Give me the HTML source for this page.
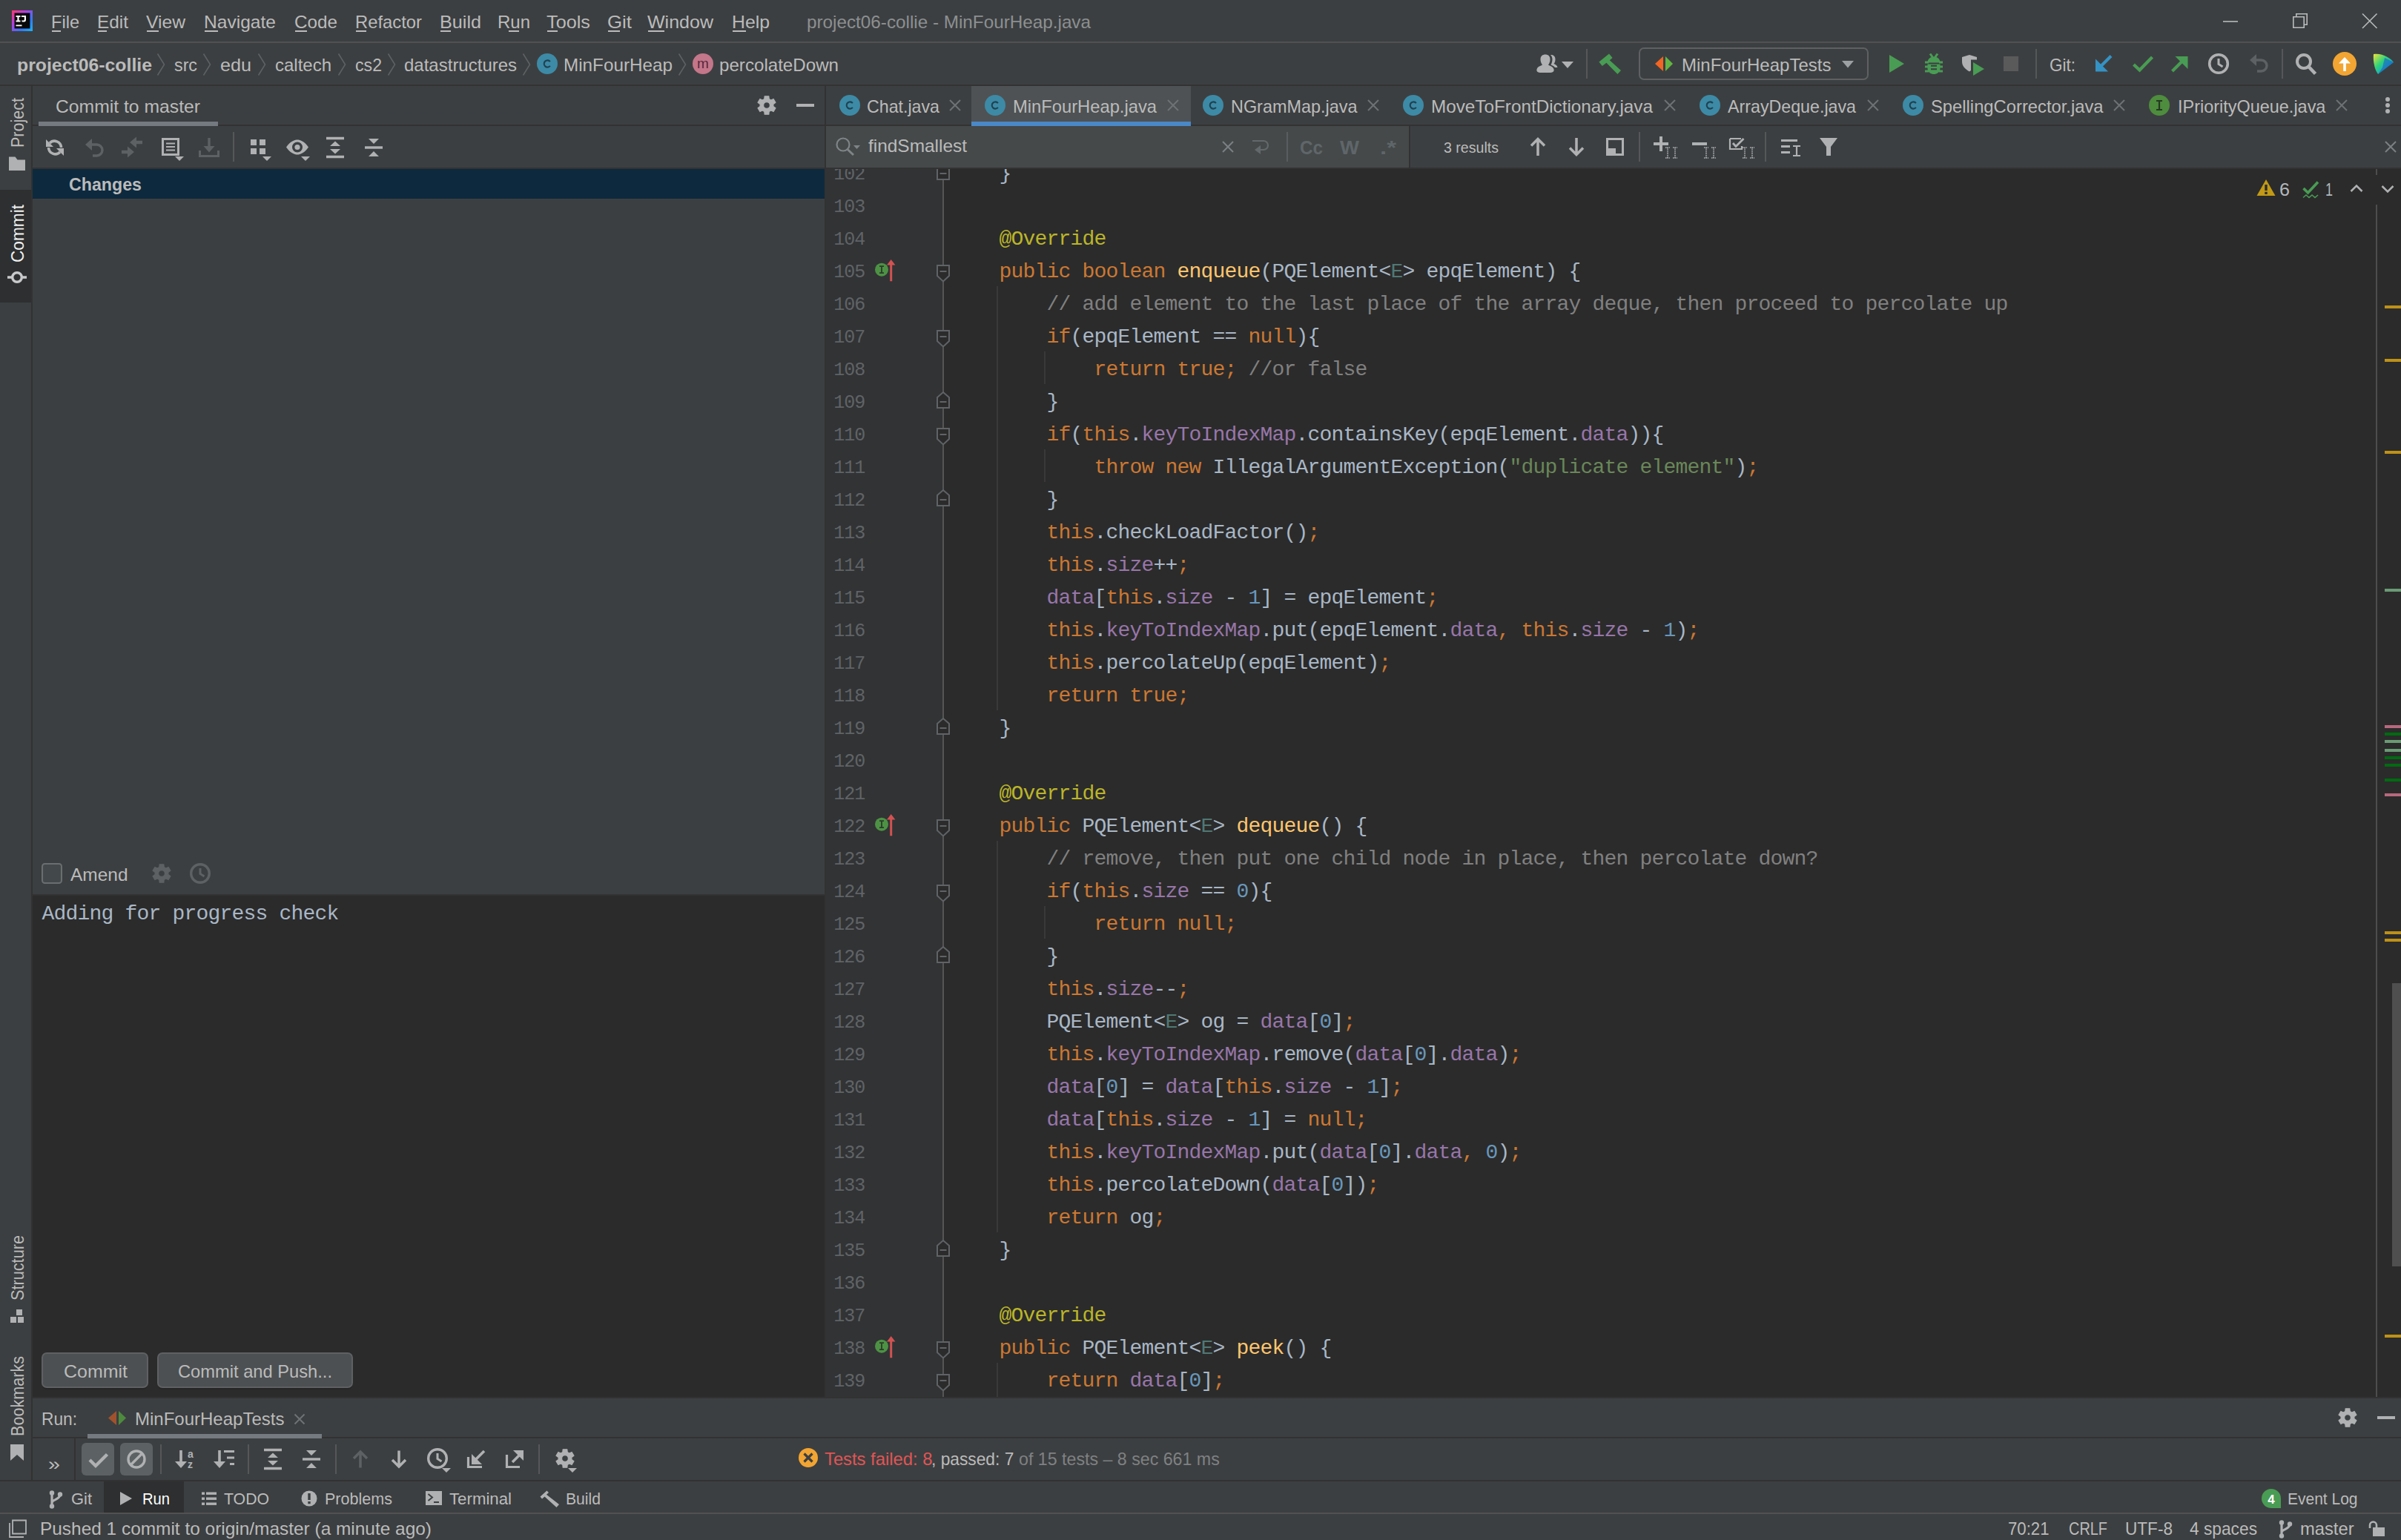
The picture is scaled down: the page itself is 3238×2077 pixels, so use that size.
<!DOCTYPE html>
<html><head><meta charset="utf-8"><title>project06-collie - MinFourHeap.java</title><style>
html,body{margin:0;padding:0;background:#3c3f41;}
body{width:3238px;height:2077px;overflow:hidden;position:relative;font-family:"Liberation Sans",sans-serif;color:#bbbbbb;}
div,span,svg{position:absolute;}
span{white-space:pre;line-height:1;}
.cl{font-family:"Liberation Mono",monospace;font-size:28px;letter-spacing:-0.803px;color:#a9b7c6;}
.cl i{font-style:normal;}
.k{color:#cc7832}.m{color:#ffc66d}.a{color:#bbb529}.c{color:#808080}.s{color:#6a8759}.n{color:#6897bb}.f{color:#9876aa}.t{color:#507874}
.ln{font-family:"Liberation Mono",monospace;font-size:25px;letter-spacing:-1.0px;color:#606366;}
</style></head><body>
<div style="left:0px;top:56px;width:3238px;height:2px;background:#515151;"></div>
<div style="left:0px;top:114px;width:3238px;height:2px;background:#323232;"></div>
<div style="left:42px;top:116px;width:2px;height:1882px;background:#323232;"></div>
<div style="left:0px;top:256px;width:42px;height:152px;background:#2d2f30;"></div>
<div style="left:44px;top:168px;width:1068px;height:2px;background:#323232;"></div>
<div style="left:52px;top:164px;width:242px;height:6px;background:#747a80;"></div>
<div style="left:44px;top:226px;width:1068px;height:2px;background:#323232;"></div>
<div style="left:44px;top:228px;width:1068px;height:40px;background:#0d293e;"></div>
<div style="left:44px;top:1206px;width:1068px;height:678px;background:#2b2b2b;"></div>
<div style="left:44px;top:1206px;width:1068px;height:2px;background:#323232;"></div>
<div style="left:1112px;top:116px;width:2px;height:1770px;background:#323232;"></div>
<div style="left:1114px;top:168px;width:2124px;height:2px;background:#323232;"></div>
<div style="left:1310px;top:116px;width:296px;height:54px;background:#4e5254;"></div>
<div style="left:1310px;top:164px;width:296px;height:6px;background:#4a88c7;"></div>
<div style="left:1114px;top:170px;width:786px;height:56px;background:#45494a;"></div>
<div style="left:1900px;top:170px;width:2px;height:56px;background:#323232;"></div>
<div style="left:1114px;top:226px;width:2124px;height:2px;background:#323232;"></div>
<div style="left:1735px;top:178px;width:2px;height:40px;background:#5a5d5f;"></div>
<div style="left:2210px;top:178px;width:2px;height:40px;background:#555759;"></div>
<div style="left:2380px;top:178px;width:2px;height:40px;background:#555759;"></div>
<div style="left:1114px;top:228px;width:2124px;height:1656px;background:#2b2b2b;"></div>
<div style="left:1114px;top:228px;width:158px;height:1656px;background:#313335;"></div>
<div style="left:1271px;top:228px;width:2px;height:1656px;background:#555555;"></div>
<div style="left:3204px;top:228px;width:2px;height:1656px;background:#4d4d4d;"></div>
<div style="left:3100px;top:236px;width:138px;height:40px;background:#2b2b2b;"></div>
<div style="left:44px;top:1884px;width:3194px;height:2px;background:#323232;"></div>
<div style="left:44px;top:1938px;width:3194px;height:2px;background:#323232;"></div>
<div style="left:118px;top:1934px;width:316px;height:6px;background:#747a80;"></div>
<div style="left:100px;top:1940px;width:2px;height:56px;background:#323232;"></div>
<div style="left:0px;top:1996px;width:3238px;height:2px;background:#323232;"></div>
<div style="left:140px;top:1998px;width:108px;height:42px;background:#2d2f30;"></div>
<div style="left:0px;top:2040px;width:3238px;height:2px;background:#515151;"></div>
<div style="left:2139px;top:66px;width:2px;height:40px;background:#555759;"></div>
<div style="left:2745px;top:66px;width:2px;height:40px;background:#555759;"></div>
<div style="left:3077px;top:66px;width:2px;height:40px;background:#555759;"></div>
<div style="left:216px;top:1948px;width:2px;height:40px;background:#555759;"></div>
<div style="left:334px;top:1948px;width:2px;height:40px;background:#555759;"></div>
<div style="left:452px;top:1948px;width:2px;height:40px;background:#555759;"></div>
<div style="left:726px;top:1948px;width:2px;height:40px;background:#555759;"></div>
<div style="left:314px;top:178px;width:2px;height:40px;background:#555759;"></div>
<div style="left:3216px;top:412px;width:22px;height:4px;background:#be9117;"></div>
<div style="left:3216px;top:484px;width:22px;height:4px;background:#be9117;"></div>
<div style="left:3216px;top:608px;width:22px;height:4px;background:#be9117;"></div>
<div style="left:3216px;top:794px;width:22px;height:4px;background:#6a9a75;"></div>
<div style="left:3216px;top:978px;width:22px;height:4px;background:#b8687e;"></div>
<div style="left:3216px;top:988px;width:22px;height:4px;background:#006a12;"></div>
<div style="left:3216px;top:998px;width:22px;height:4px;background:#6a9a75;"></div>
<div style="left:3216px;top:1010px;width:22px;height:4px;background:#6a9a75;"></div>
<div style="left:3216px;top:1020px;width:22px;height:4px;background:#006a12;"></div>
<div style="left:3216px;top:1030px;width:22px;height:4px;background:#006a12;"></div>
<div style="left:3216px;top:1050px;width:22px;height:4px;background:#006a12;"></div>
<div style="left:3216px;top:1070px;width:22px;height:4px;background:#b8687e;"></div>
<div style="left:3216px;top:1256px;width:22px;height:4px;background:#be9117;"></div>
<div style="left:3216px;top:1266px;width:22px;height:4px;background:#be9117;"></div>
<div style="left:3216px;top:1800px;width:22px;height:4px;background:#be9117;"></div>
<div style="left:3226px;top:1326px;width:12px;height:382px;background:#4f4f4f;"></div>
<div style="left:70px;top:41px;width:12px;height:2px;background:#bbbbbb;"></div>
<div style="left:132px;top:41px;width:12px;height:2px;background:#bbbbbb;"></div>
<div style="left:198px;top:41px;width:16px;height:2px;background:#bbbbbb;"></div>
<div style="left:276px;top:41px;width:18px;height:2px;background:#bbbbbb;"></div>
<div style="left:398px;top:41px;width:16px;height:2px;background:#bbbbbb;"></div>
<div style="left:480px;top:41px;width:14px;height:2px;background:#bbbbbb;"></div>
<div style="left:594px;top:41px;width:14px;height:2px;background:#bbbbbb;"></div>
<div style="left:686px;top:41px;width:14px;height:2px;background:#bbbbbb;"></div>
<div style="left:738px;top:41px;width:14px;height:2px;background:#bbbbbb;"></div>
<div style="left:820px;top:41px;width:16px;height:2px;background:#bbbbbb;"></div>
<div style="left:874px;top:41px;width:22px;height:2px;background:#bbbbbb;"></div>
<div style="left:988px;top:41px;width:18px;height:2px;background:#bbbbbb;"></div>
<svg style="left:0;top:0" width="3238" height="2077" viewBox="0 0 3238 2077"><defs><linearGradient id="lg1" x1="0" y1="0" x2="1" y2="1"><stop offset="0" stop-color="#fc3a6b"/><stop offset="0.35" stop-color="#b43fe0"/><stop offset="0.7" stop-color="#2d7cf5"/><stop offset="1" stop-color="#1cb4f0"/></linearGradient><linearGradient id="lg2" x1="0" y1="0" x2="1" y2="1"><stop offset="0" stop-color="#f6e23a"/><stop offset="0.4" stop-color="#2fd37a"/><stop offset="0.75" stop-color="#14a0d8"/><stop offset="1" stop-color="#1b4fc4"/></linearGradient></defs>
<rect x="16" y="14" width="28" height="28" fill="url(#lg1)"/>
<rect x="19.5" y="17.5" width="21" height="21" fill="#080808"/>
<path d="M21.5 21 H27.5 V23 H25.6 V27.5 H27.5 V29.5 H21.5 V27.5 H23.4 V23 H21.5 Z" fill="#fff" />
<path d="M29 21 H35 V27 C35 29.5 32.5 30 29.5 29.3 V27.3 C31.5 27.9 32.8 27.8 32.8 26.5 V23 H29 Z" fill="#fff" />
<rect x="21.5" y="33.5" width="8" height="1.8" fill="#fff"/>
<path d="M2998 29 H3018" fill="none" stroke="#b9bbbc" stroke-width="1.6" />
<path d="M3092.8 22.8 H3107.2 V37.2 H3092.8 Z M3096.8 22.8 V18.8 H3111.2 V33.2 H3107.2" fill="none" stroke="#b9bbbc" stroke-width="1.6" />
<path d="M3186 18.5 L3205.5 38 M3205.5 18.5 L3186 38" fill="none" stroke="#b9bbbc" stroke-width="1.6" />
<path d="M212.5 72.5 L221.5 87 L212.5 101.5" fill="none" stroke="#5e6164" stroke-width="1.6" />
<path d="M274.5 72.5 L283.5 87 L274.5 101.5" fill="none" stroke="#5e6164" stroke-width="1.6" />
<path d="M348.5 72.5 L357.5 87 L348.5 101.5" fill="none" stroke="#5e6164" stroke-width="1.6" />
<path d="M456.5 72.5 L465.5 87 L456.5 101.5" fill="none" stroke="#5e6164" stroke-width="1.6" />
<path d="M523.5 72.5 L532.5 87 L523.5 101.5" fill="none" stroke="#5e6164" stroke-width="1.6" />
<path d="M705.5 72.5 L714.5 87 L705.5 101.5" fill="none" stroke="#5e6164" stroke-width="1.6" />
<path d="M915.5 72.5 L924.5 87 L915.5 101.5" fill="none" stroke="#5e6164" stroke-width="1.6" />
<circle cx="738" cy="86" r="14" fill="#3d8aa6"/>
<path d="M741.9 83.1 A4.6 4.6 0 1 0 741.9 88.9" fill="none" stroke="#1f4352" stroke-width="2.1" />
<circle cx="948" cy="86" r="14" fill="#c4768a"/>
<text x="948" y="92" text-anchor="middle" font-family="'Liberation Sans'" font-size="19" fill="#55283a">m</text>
<path d="M2079 98 C2073 98 2072 96 2072.5 93.5 C2073.5 89.5 2078 89 2080 87.5 C2078 85 2077.5 82 2077.5 80 C2077.5 75.5 2080.5 73.5 2084 73.5 C2087.5 73.5 2090.5 75.5 2090.5 80 C2090.5 82 2090 85 2088 87.5 C2090 89 2094.5 89.5 2095.5 93.5 C2096 96 2095 98 2089 98 Z" fill="#afb1b3" />
<path d="M2091 74 C2095 73.5 2097.5 76 2097.5 80 C2097.5 82 2097 84.5 2095.5 86 C2097.5 87 2100 88 2100.5 91 L2097 91 C2096 89.5 2094 88.6 2091.5 87.6 C2093 85 2093.5 82 2093.5 80 C2093.5 77.5 2092.7 75.5 2091 74 Z" fill="#afb1b3" />
<path d="M2106 83 H2122 L2114 92 Z" fill="#afb1b3" />
<path d="M2156.4 83.4 L2170 72.4 L2174.6 78 L2170.8 81.2 L2186 95 L2181.4 100 L2166.4 84.8 L2160.8 89 Z" fill="#499c54" />
<rect x="2211" y="65" width="308" height="42" rx="6" fill="none" stroke="#5e6062" stroke-width="2"/>
<path d="M2232 86 L2243 76 V96 Z" fill="#f26522" />
<path d="M2256 86 L2246 76 V96 Z" fill="#62b543" />
<path d="M2484 82 H2500 L2492 91.5 Z" fill="#9da0a2" />
<path d="M2548 74 L2568 86 L2548 98 Z" fill="#499c54" />
<path d="M2599.5 84.5 C2599.5 79 2604 76.5 2608 76.5 C2612 76.5 2616.5 79 2616.5 84.5 Z" fill="#499c54" />
<path d="M2599.5 86.5 H2616.5 V92 C2616.5 97.5 2612 100 2608 100 C2604 100 2599.5 97.5 2599.5 92 Z" fill="#499c54" />
<path d="M2603 72.5 L2606.5 77.5 M2613 72.5 L2609.5 77.5 M2596 84 H2601 M2615 84 H2620 M2596 90 H2601 M2615 90 H2620 M2596 96 H2601 M2615 96 H2620" fill="none" stroke="#499c54" stroke-width="3" />
<path d="M2604 88.8 H2612 M2604 93.2 H2612" fill="none" stroke="#3c3f41" stroke-width="2" />
<path d="M2646 77 L2656 74 L2666 77 V80.5 L2658 80.5 L2658 95 L2656 96.5 C2650 93 2646 89 2646 83 Z" fill="#afb1b3" />
<path d="M2661 84 L2676 93 L2661 102 Z" fill="#499c54" />
<rect x="2702" y="76" width="20" height="20" fill="#5a5a5a"/>
<path d="M2847 75.5 L2830 92.5" fill="none" stroke="#3592c4" stroke-width="4" />
<path d="M2826 79.5 V96.5 H2843 Z" fill="#3592c4" />
<path d="M2877.5 87 L2885.5 94.5 L2902.5 77" fill="none" stroke="#499c54" stroke-width="4.2" />
<path d="M2929.5 96 L2946 79.5" fill="none" stroke="#499c54" stroke-width="4" />
<path d="M2933.5 76 H2950.5 V93 Z" fill="#499c54" />
<circle cx="2992" cy="86" r="12.3" fill="none" stroke="#afb1b3" stroke-width="3.6"/>
<path d="M2992 79 V86.5 L2997.5 90" fill="none" stroke="#afb1b3" stroke-width="3" />
<path d="M3044 96 H3049.5 A7.5 7.5 0 0 0 3049.5 81 H3039" fill="none" stroke="#5e6163" stroke-width="3.4" />
<path d="M3034 81 L3043 73 V89 Z" fill="#5e6163" />
<circle cx="3107" cy="83" r="9" fill="none" stroke="#afb1b3" stroke-width="4"/>
<path d="M3113.5 90 L3122.5 99.5" fill="none" stroke="#afb1b3" stroke-width="4.6" />
<circle cx="3162" cy="86" r="16" fill="#f2a532"/>
<path d="M3162 96 V79" fill="none" stroke="#fff" stroke-width="3.6" />
<path d="M3154 85.5 L3162 77 L3170 85.5 Z" fill="#fff" />
<path d="M3201 73 C3212 71 3224 78 3228 84 L3207 100 C3203 95 3200 84 3201 73 Z" fill="url(#lg2)" />
<path d="M3228 84 L3216 78 L3213 91 L3207 100 Z" fill="#1a56c9" opacity="0.55"/>
<path d="M1030.83 133.58 L1031.15 129.83 L1036.85 129.83 L1037.17 133.58 L1039.71 135.04 L1043.12 133.45 L1045.97 138.38 L1042.88 140.53 L1042.88 143.47 L1045.97 145.62 L1043.12 150.55 L1039.71 148.96 L1037.17 150.42 L1036.85 154.17 L1031.15 154.17 L1030.83 150.42 L1028.29 148.96 L1024.88 150.55 L1022.03 145.62 L1025.12 143.47 L1025.12 140.53 L1022.03 138.38 L1024.88 133.45 L1028.29 135.04 Z M1038.40 142.00 A4.4 4.4 0 1 0 1029.60 142.00 A4.4 4.4 0 1 0 1038.40 142.00 Z" fill="#afb1b3" fill-rule="evenodd" stroke="#afb1b3" stroke-width="1.2" stroke-linejoin="round"/>
<rect x="1074" y="140" width="24" height="4" fill="#afb1b3"/>
<path d="M82.5 199 A9 9 0 0 0 67 193 M65.5 199 A9 9 0 0 0 81 205" fill="none" stroke="#afb1b3" stroke-width="3.6" />
<path d="M62 188 V198 H72 Z" fill="#afb1b3" />
<path d="M86 210 V200 H76 Z" fill="#afb1b3" />
<path d="M125 210 H130.5 A7.5 7.5 0 0 0 130.5 195 H120" fill="none" stroke="#5e6163" stroke-width="3.4" />
<path d="M115 195 L124 187 V203 Z" fill="#5e6163" />
<path d="M175 192 L184 184.5 V189.8 H192 V194.2 H184 V199.5 Z" fill="#5e6163" />
<path d="M181 205 L172 197.5 V202.8 H164 V207.2 H172 V212.5 Z" fill="#5e6163" />
<path d="M219.5 187.5 H240.5 V208.5 H219.5 Z" fill="none" stroke="#afb1b3" stroke-width="3" />
<path d="M224 193.5 H236 M224 198 H236 M224 202.5 H236" fill="none" stroke="#afb1b3" stroke-width="1.8" />
<path d="M236 211 H248 L242 217 Z" fill="#afb1b3" />
<path d="M282 186 V200" fill="none" stroke="#5e6163" stroke-width="3.4" />
<path d="M274.5 197 H289.5 L282 205.5 Z" fill="#5e6163" />
<path d="M269.5 203 V210.5 H294.5 V203" fill="none" stroke="#5e6163" stroke-width="3" />
<rect x="338" y="188" width="8" height="8" fill="#afb1b3"/>
<rect x="350" y="188" width="8" height="8" fill="#afb1b3"/>
<rect x="338" y="200" width="8" height="8" fill="#afb1b3"/>
<rect x="350" y="200" width="8" height="8" fill="#afb1b3"/>
<path d="M354 211 H366 L360 217 Z" fill="#afb1b3" />
<path d="M386 198.5 C391 191 397 188.5 401 188.5 C405 188.5 411 191 416 198.5 C411 206 405 208.5 401 208.5 C397 208.5 391 206 386 198.5 Z M401 191.5 A7 7 0 1 0 401 205.5 A7 7 0 1 0 401 191.5 Z" fill="#afb1b3" fill-rule="evenodd"/>
<circle cx="401" cy="198.5" r="3.6" fill="#afb1b3"/>
<path d="M406 211 H418 L412 217 Z" fill="#afb1b3" />
<path d="M440 186.5 H464 M440 211.5 H464" fill="none" stroke="#afb1b3" stroke-width="3.4" />
<path d="M445 197 H459 L452 190.5 Z M445 201 H459 L452 207.5 Z" fill="#afb1b3" />
<path d="M492 199 H516" fill="none" stroke="#afb1b3" stroke-width="3.4" />
<path d="M497 187 H511 L504 194 Z M497 211 H511 L504 204 Z" fill="#afb1b3" />
<circle cx="1146" cy="142" r="14" fill="#3d8aa6"/>
<path d="M1149.9 139.1 A4.6 4.6 0 1 0 1149.9 144.9" fill="none" stroke="#1f4352" stroke-width="2.1" />
<circle cx="1342" cy="142" r="14" fill="#3d8aa6"/>
<path d="M1345.9 139.1 A4.6 4.6 0 1 0 1345.9 144.9" fill="none" stroke="#1f4352" stroke-width="2.1" />
<circle cx="1636" cy="142" r="14" fill="#3d8aa6"/>
<path d="M1639.9 139.1 A4.6 4.6 0 1 0 1639.9 144.9" fill="none" stroke="#1f4352" stroke-width="2.1" />
<circle cx="1906" cy="142" r="14" fill="#3d8aa6"/>
<path d="M1909.9 139.1 A4.6 4.6 0 1 0 1909.9 144.9" fill="none" stroke="#1f4352" stroke-width="2.1" />
<circle cx="2306" cy="142" r="14" fill="#3d8aa6"/>
<path d="M2309.9 139.1 A4.6 4.6 0 1 0 2309.9 144.9" fill="none" stroke="#1f4352" stroke-width="2.1" />
<circle cx="2580" cy="142" r="14" fill="#3d8aa6"/>
<path d="M2583.9 139.1 A4.6 4.6 0 1 0 2583.9 144.9" fill="none" stroke="#1f4352" stroke-width="2.1" />
<circle cx="2912" cy="142" r="14" fill="#4e8c3e"/>
<path d="M2908 136 H2916 M2912 136 V148 M2908 148 H2916" fill="none" stroke="#253a22" stroke-width="2.2" />
<path d="M1281 135 L1295 149 M1295 135 L1281 149" fill="none" stroke="#6e7275" stroke-width="2" />
<path d="M1575 135 L1589 149 M1589 135 L1575 149" fill="none" stroke="#6e7275" stroke-width="2" />
<path d="M1845 135 L1859 149 M1859 135 L1845 149" fill="none" stroke="#6e7275" stroke-width="2" />
<path d="M2245 135 L2259 149 M2259 135 L2245 149" fill="none" stroke="#6e7275" stroke-width="2" />
<path d="M2519 135 L2533 149 M2533 135 L2519 149" fill="none" stroke="#6e7275" stroke-width="2" />
<path d="M2851 135 L2865 149 M2865 135 L2851 149" fill="none" stroke="#6e7275" stroke-width="2" />
<path d="M3151 135 L3165 149 M3165 135 L3151 149" fill="none" stroke="#6e7275" stroke-width="2" />
<circle cx="3220" cy="134" r="3" fill="#afb1b3"/>
<circle cx="3220" cy="142" r="3" fill="#afb1b3"/>
<circle cx="3220" cy="150" r="3" fill="#afb1b3"/>
<circle cx="1137" cy="195" r="8.5" fill="none" stroke="#7f8487" stroke-width="2.2"/>
<path d="M1143 201.5 L1151 209" fill="none" stroke="#7f8487" stroke-width="3" />
<path d="M1151 196 H1160 L1155.5 201 Z" fill="#7f8487" />
<path d="M1649 191 L1663 205 M1663 191 L1649 205" fill="none" stroke="#7b8083" stroke-width="2" />
<path d="M1689 190 H1704 A6 6 0 0 1 1704 202 H1696" fill="none" stroke="#63686b" stroke-width="2.2" />
<path d="M1692 202 L1700 196 V208 Z" fill="#63686b" />
<path d="M2074 210 V188 M2065 196.5 L2074 187.5 L2083 196.5" fill="none" stroke="#afb1b3" stroke-width="3.5" />
<path d="M2126 186 V208 M2117 199.5 L2126 208.5 L2135 199.5" fill="none" stroke="#afb1b3" stroke-width="3.5" />
<path d="M2167.5 187.5 H2188.5 V208.5 H2167.5 Z" fill="none" stroke="#afb1b3" stroke-width="3" />
<rect x="2167" y="200" width="12" height="9" fill="#afb1b3"/>
<path d="M2240 184 V204 M2230 194 H2250" fill="none" stroke="#afb1b3" stroke-width="4" />
<path d="M2246 199 H2252 M2249 199 V213 M2246 213 H2252" fill="none" stroke="#afb1b3" stroke-width="1.6" stroke-dasharray="1.6 0.9"/>
<path d="M2256 199 H2262 M2259 199 V213 M2256 213 H2262" fill="none" stroke="#afb1b3" stroke-width="1.6" stroke-dasharray="1.6 0.9"/>
<path d="M2282 194 H2302" fill="none" stroke="#afb1b3" stroke-width="4" />
<path d="M2298 199 H2304 M2301 199 V213 M2298 213 H2304" fill="none" stroke="#afb1b3" stroke-width="1.6" stroke-dasharray="1.6 0.9"/>
<path d="M2308 199 H2314 M2311 199 V213 M2308 213 H2314" fill="none" stroke="#afb1b3" stroke-width="1.6" stroke-dasharray="1.6 0.9"/>
<path d="M2333 187 H2348 M2333 187 V201 H2349 V197" fill="none" stroke="#afb1b3" stroke-width="2.2" />
<path d="M2337 193 L2341 197.5 L2351.5 187" fill="none" stroke="#afb1b3" stroke-width="2.8" />
<path d="M2350 199 H2356 M2353 199 V213 M2350 213 H2356" fill="none" stroke="#afb1b3" stroke-width="1.6" stroke-dasharray="1.6 0.9"/>
<path d="M2360 199 H2366 M2363 199 V213 M2360 213 H2366" fill="none" stroke="#afb1b3" stroke-width="1.6" stroke-dasharray="1.6 0.9"/>
<path d="M2402 189.5 H2424 M2402 197.5 H2414 M2402 205.5 H2414" fill="none" stroke="#afb1b3" stroke-width="3" />
<path d="M2418 197 H2428 M2423 197 V210 M2418 210 H2428" fill="none" stroke="#afb1b3" stroke-width="2.2" />
<path d="M2454 186 H2478 L2469 198 V210 H2463 V198 Z" fill="#afb1b3" />
<path d="M3217 191 L3231 205 M3231 191 L3217 205" fill="none" stroke="#7b8083" stroke-width="2" />
<path d="M3056 242 L3068.5 264 H3043.5 Z" fill="#c29a15" />
<path d="M3054.3 249 H3057.7 V257 H3054.3 Z M3054.3 258.8 H3057.7 V262 H3054.3 Z" fill="#2b2b2b" />
<path d="M3106.5 254 L3112.5 260 L3126 245.5" fill="none" stroke="#499c54" stroke-width="3.6" />
<path d="M3106 266.5 L3110 263 L3114 266.5 L3118 263 L3122 266.5 L3126 263" fill="none" stroke="#499c54" stroke-width="1.6" />
<path d="M3170.5 258 L3178 250.5 L3185.5 258" fill="none" stroke="#afb1b3" stroke-width="2.6" />
<path d="M3212.5 251 L3220 258.5 L3227.5 251" fill="none" stroke="#afb1b3" stroke-width="2.6" />
<path d="M12 211.5 H20.5 L23.5 215.5 H34 V230 H12 Z" fill="#afb1b3" />
<circle cx="23" cy="374" r="6.3" fill="none" stroke="#c8c9ca" stroke-width="3.4"/>
<path d="M10 374 H16 M30 374 H36" fill="none" stroke="#c8c9ca" stroke-width="3.4" />
<rect x="22" y="1766" width="8" height="8" fill="#afb1b3"/>
<rect x="14" y="1776" width="8" height="8" fill="#afb1b3"/>
<rect x="24" y="1776" width="8" height="8" fill="#afb1b3"/>
<path d="M14 1948 H32 V1970 L23 1962 L14 1970 Z" fill="#afb1b3" />
<rect x="57" y="1165" width="26" height="26" rx="3.5" fill="#43494a" stroke="#6b6e70" stroke-width="2"/>
<path d="M214.83 1169.58 L215.15 1165.83 L220.85 1165.83 L221.17 1169.58 L223.71 1171.04 L227.12 1169.45 L229.97 1174.38 L226.88 1176.53 L226.88 1179.47 L229.97 1181.62 L227.12 1186.55 L223.71 1184.96 L221.17 1186.42 L220.85 1190.17 L215.15 1190.17 L214.83 1186.42 L212.29 1184.96 L208.88 1186.55 L206.03 1181.62 L209.12 1179.47 L209.12 1176.53 L206.03 1174.38 L208.88 1169.45 L212.29 1171.04 Z M222.40 1178.00 A4.4 4.4 0 1 0 213.60 1178.00 A4.4 4.4 0 1 0 222.40 1178.00 Z" fill="#5d6163" fill-rule="evenodd" stroke="#5d6163" stroke-width="1.2" stroke-linejoin="round"/>
<circle cx="270" cy="1178" r="12.3" fill="none" stroke="#5d6163" stroke-width="3.4"/>
<path d="M270 1171 V1178.5 L275.5 1182" fill="none" stroke="#5d6163" stroke-width="3" />
<rect x="57" y="1828" width="142" height="46" rx="6" fill="#252525"/><rect x="213" y="1828" width="262" height="46" rx="6" fill="#252525"/>
<rect x="57" y="1825" width="142" height="46" rx="6" fill="#4c5052" stroke="#5e6062" stroke-width="2"/>
<rect x="213" y="1825" width="262" height="46" rx="6" fill="#4c5052" stroke="#5e6062" stroke-width="2"/>
<path d="M146 1912.5 L157 1903 V1922 Z" fill="#a0522d" />
<path d="M170 1912.5 L160 1903 V1922 Z" fill="#4d8a3e" />
<path d="M397.5 1907.5 L410.5 1920.5 M410.5 1907.5 L397.5 1920.5" fill="none" stroke="#6e7275" stroke-width="2" />
<path d="M3162.83 1903.58 L3163.15 1899.83 L3168.85 1899.83 L3169.17 1903.58 L3171.71 1905.04 L3175.12 1903.45 L3177.97 1908.38 L3174.88 1910.53 L3174.88 1913.47 L3177.97 1915.62 L3175.12 1920.55 L3171.71 1918.96 L3169.17 1920.42 L3168.85 1924.17 L3163.15 1924.17 L3162.83 1920.42 L3160.29 1918.96 L3156.88 1920.55 L3154.03 1915.62 L3157.12 1913.47 L3157.12 1910.53 L3154.03 1908.38 L3156.88 1903.45 L3160.29 1905.04 Z M3170.40 1912.00 A4.4 4.4 0 1 0 3161.60 1912.00 A4.4 4.4 0 1 0 3170.40 1912.00 Z" fill="#afb1b3" fill-rule="evenodd" stroke="#afb1b3" stroke-width="1.2" stroke-linejoin="round"/>
<rect x="3206" y="1910" width="24" height="4" fill="#afb1b3"/>
<rect x="110" y="1946" width="44" height="44" rx="6" fill="#5c6164"/>
<rect x="162" y="1946" width="44" height="44" rx="6" fill="#5c6164"/>
<path d="M121 1969 L129 1977 L144.5 1961.5" fill="none" stroke="#afb1b3" stroke-width="4.4" />
<circle cx="184" cy="1968" r="11" fill="none" stroke="#afb1b3" stroke-width="3.4"/>
<path d="M176.5 1975.5 L191.5 1960.5" fill="none" stroke="#afb1b3" stroke-width="3.4" />
<path d="M244 1956 V1976" fill="none" stroke="#afb1b3" stroke-width="3.6" />
<path d="M236 1971 H252 L244 1980 Z" fill="#afb1b3" />
<text x="253" y="1966" font-family="'Liberation Sans'" font-weight="700" font-size="14" fill="#afb1b3">a</text>
<text x="253" y="1979.5" font-family="'Liberation Sans'" font-weight="700" font-size="14" fill="#afb1b3">z</text>
<path d="M296 1956 V1976" fill="none" stroke="#afb1b3" stroke-width="3.6" />
<path d="M288 1971 H304 L296 1980 Z" fill="#afb1b3" />
<path d="M302 1957.5 H316 M306 1966 H316 M310 1974.5 H316" fill="none" stroke="#afb1b3" stroke-width="3" />
<path d="M356 1955.5 H380 M356 1980.5 H380" fill="none" stroke="#afb1b3" stroke-width="3.4" />
<path d="M361 1966 H375 L368 1959.5 Z M361 1970 H375 L368 1976.5 Z" fill="#afb1b3" />
<path d="M408 1968 H432" fill="none" stroke="#afb1b3" stroke-width="3.4" />
<path d="M413 1956 H427 L420 1963 Z M413 1980 H427 L420 1973 Z" fill="#afb1b3" />
<path d="M486 1979.5 V1958.5 M477 1967.0 L486 1958.0 L495 1967.0" fill="none" stroke="#5e6163" stroke-width="3.5" />
<path d="M538 1956.5 V1977.5 M529 1969.0 L538 1978.0 L547 1969.0" fill="none" stroke="#afb1b3" stroke-width="3.5" />
<circle cx="590" cy="1967" r="12.3" fill="none" stroke="#afb1b3" stroke-width="3.4"/>
<path d="M590 1960 V1967.5 L595.5 1971" fill="none" stroke="#afb1b3" stroke-width="3" />
<path d="M596 1980 H608 L602 1986 Z" fill="#afb1b3" />
<path d="M653 1957 L638 1972" fill="none" stroke="#afb1b3" stroke-width="3.6" />
<path d="M636 1961 V1975 H650 Z" fill="#afb1b3" />
<path d="M631.5 1965 V1978.5 H650" fill="none" stroke="#afb1b3" stroke-width="3.2" />
<path d="M691 1972 L703 1960" fill="none" stroke="#afb1b3" stroke-width="3.6" />
<path d="M692 1956 H706 V1970 Z" fill="#afb1b3" />
<path d="M683.5 1962 V1978.5 H701" fill="none" stroke="#afb1b3" stroke-width="3.2" />
<path d="M758.83 1958.58 L759.15 1954.83 L764.85 1954.83 L765.17 1958.58 L767.71 1960.04 L771.12 1958.45 L773.97 1963.38 L770.88 1965.53 L770.88 1968.47 L773.97 1970.62 L771.12 1975.55 L767.71 1973.96 L765.17 1975.42 L764.85 1979.17 L759.15 1979.17 L758.83 1975.42 L756.29 1973.96 L752.88 1975.55 L750.03 1970.62 L753.12 1968.47 L753.12 1965.53 L750.03 1963.38 L752.88 1958.45 L756.29 1960.04 Z M766.40 1967.00 A4.4 4.4 0 1 0 757.60 1967.00 A4.4 4.4 0 1 0 766.40 1967.00 Z" fill="#afb1b3" fill-rule="evenodd" stroke="#afb1b3" stroke-width="1.2" stroke-linejoin="round"/>
<path d="M766 1980 H778 L772 1986 Z" fill="#afb1b3" />
<circle cx="1090" cy="1966" r="13" fill="#f2a532"/>
<path d="M1084.5 1960.5 L1095.5 1971.5 M1095.5 1960.5 L1084.5 1971.5" fill="none" stroke="#3c3f41" stroke-width="3.2" />
<g transform="translate(66,2010) scale(1.0)"><circle cx="4" cy="3.5" r="3.2" fill="#afb1b3"/><circle cx="15" cy="5.5" r="3.2" fill="#afb1b3"/><circle cx="4" cy="21.5" r="3.2" fill="#afb1b3"/><path d="M4 3.5 V21.5 M15 5.5 C15 13 4 12 4 17" fill="none" stroke="#afb1b3" stroke-width="3.2"/></g>
<path d="M162 2012 L178 2021 L162 2030 Z" fill="#afb1b3" />
<rect x="272" y="2012.5" width="4" height="3.4" fill="#afb1b3"/><rect x="278" y="2012.5" width="14" height="3.4" fill="#afb1b3"/>
<rect x="272" y="2019.5" width="4" height="3.4" fill="#afb1b3"/><rect x="278" y="2019.5" width="14" height="3.4" fill="#afb1b3"/>
<rect x="272" y="2026.5" width="4" height="3.4" fill="#afb1b3"/><rect x="278" y="2026.5" width="14" height="3.4" fill="#afb1b3"/>
<circle cx="417" cy="2021" r="10.5" fill="#afb1b3"/>
<path d="M415.3 2014 H418.7 V2023 H415.3 Z M415.3 2025 H418.7 V2028.3 H415.3 Z" fill="#3c3f41" />
<rect x="574" y="2011" width="22" height="19" fill="#afb1b3"/>
<path d="M577.5 2015 L583 2019.5 L577.5 2024 M585 2026 H592" fill="none" stroke="#3c3f41" stroke-width="2" />
<path d="M728.5 2018.5 L737.5 2010.5 L740 2013 L737 2015.8 L754 2029 L750.5 2033 L734.5 2018.5 L731 2021.5 Z" fill="#afb1b3" />
<path d="M3063 2008 A13 13 0 1 0 3063 2034 H3076 V2021 A13 13 0 0 0 3063 2008 Z" fill="#499c54" />
<text x="3063" y="2027.5" text-anchor="middle" font-family="'Liberation Sans'" font-weight="700" font-size="17" fill="#fff">4</text>
<path d="M17 2050.5 H35 V2068.5 H17 Z" fill="none" stroke="#afb1b3" stroke-width="1.8" />
<path d="M13 2054 V2073 H32" fill="none" stroke="#afb1b3" stroke-width="1.8" />
<g transform="translate(3073,2050) scale(1.0)"><circle cx="4" cy="3.5" r="3.2" fill="#afb1b3"/><circle cx="15" cy="5.5" r="3.2" fill="#afb1b3"/><circle cx="4" cy="21.5" r="3.2" fill="#afb1b3"/><path d="M4 3.5 V21.5 M15 5.5 C15 13 4 12 4 17" fill="none" stroke="#afb1b3" stroke-width="3.2"/></g>
<rect x="3200" y="2060" width="16" height="12" fill="#afb1b3"/>
<path d="M3196 2061 V2057 A4.5 4.5 0 0 1 3205 2057 V2060" fill="none" stroke="#afb1b3" stroke-width="2.6" /></svg>
<div style="left:1114px;top:228px;width:2090px;height:1656px;overflow:hidden;">
<span class="ln" style="left:10.3px;top:-5.16px;">102</span>
<span class="cl" style="left:169.5px;top:-7.46px;">    }</span>
<span class="ln" style="left:10.3px;top:38.84px;">103</span>
<span class="ln" style="left:10.3px;top:82.84px;">104</span>
<span class="cl" style="left:169.5px;top:80.54px;"><i class="a">    @Override</i></span>
<span class="ln" style="left:10.3px;top:126.84px;">105</span>
<span class="cl" style="left:169.5px;top:124.54px;"><i class="k">    public boolean </i><i class="m">enqueue</i>(PQElement&lt;<i class="t">E</i>&gt; epqElement) {</span>
<span class="ln" style="left:10.3px;top:170.84px;">106</span>
<span class="cl" style="left:169.5px;top:168.54px;"><i class="c">        // add element to the last place of the array deque, then proceed to percolate up</i></span>
<span class="ln" style="left:10.3px;top:214.84px;">107</span>
<span class="cl" style="left:169.5px;top:212.54px;"><i class="k">        if</i>(epqElement == <i class="k">null</i>){</span>
<span class="ln" style="left:10.3px;top:258.84px;">108</span>
<span class="cl" style="left:169.5px;top:256.54px;"><i class="k">            return true; </i><i class="c">//or false</i></span>
<span class="ln" style="left:10.3px;top:302.84px;">109</span>
<span class="cl" style="left:169.5px;top:300.54px;">        }</span>
<span class="ln" style="left:10.3px;top:346.84px;">110</span>
<span class="cl" style="left:169.5px;top:344.54px;"><i class="k">        if</i>(<i class="k">this</i>.<i class="f">keyToIndexMap</i>.containsKey(epqElement.<i class="f">data</i>)){</span>
<span class="ln" style="left:10.3px;top:390.84px;">111</span>
<span class="cl" style="left:169.5px;top:388.54px;"><i class="k">            throw new </i>IllegalArgumentException(<i class="s">&quot;duplicate element&quot;</i>)<i class="k">;</i></span>
<span class="ln" style="left:10.3px;top:434.84px;">112</span>
<span class="cl" style="left:169.5px;top:432.54px;">        }</span>
<span class="ln" style="left:10.3px;top:478.84px;">113</span>
<span class="cl" style="left:169.5px;top:476.54px;"><i class="k">        this</i>.checkLoadFactor()<i class="k">;</i></span>
<span class="ln" style="left:10.3px;top:522.84px;">114</span>
<span class="cl" style="left:169.5px;top:520.54px;"><i class="k">        this</i>.<i class="f">size</i>++<i class="k">;</i></span>
<span class="ln" style="left:10.3px;top:566.84px;">115</span>
<span class="cl" style="left:169.5px;top:564.54px;"><i class="f">        data</i>[<i class="k">this</i>.<i class="f">size</i> - <i class="n">1</i>] = epqElement<i class="k">;</i></span>
<span class="ln" style="left:10.3px;top:610.84px;">116</span>
<span class="cl" style="left:169.5px;top:608.54px;"><i class="k">        this</i>.<i class="f">keyToIndexMap</i>.put(epqElement.<i class="f">data</i><i class="k">, this</i>.<i class="f">size</i> - <i class="n">1</i>)<i class="k">;</i></span>
<span class="ln" style="left:10.3px;top:654.84px;">117</span>
<span class="cl" style="left:169.5px;top:652.54px;"><i class="k">        this</i>.percolateUp(epqElement)<i class="k">;</i></span>
<span class="ln" style="left:10.3px;top:698.84px;">118</span>
<span class="cl" style="left:169.5px;top:696.54px;"><i class="k">        return true;</i></span>
<span class="ln" style="left:10.3px;top:742.84px;">119</span>
<span class="cl" style="left:169.5px;top:740.54px;">    }</span>
<span class="ln" style="left:10.3px;top:786.84px;">120</span>
<span class="ln" style="left:10.3px;top:830.84px;">121</span>
<span class="cl" style="left:169.5px;top:828.54px;"><i class="a">    @Override</i></span>
<span class="ln" style="left:10.3px;top:874.84px;">122</span>
<span class="cl" style="left:169.5px;top:872.54px;"><i class="k">    public </i>PQElement&lt;<i class="t">E</i>&gt; <i class="m">dequeue</i>() {</span>
<span class="ln" style="left:10.3px;top:918.84px;">123</span>
<span class="cl" style="left:169.5px;top:916.54px;"><i class="c">        // remove, then put one child node in place, then percolate down?</i></span>
<span class="ln" style="left:10.3px;top:962.84px;">124</span>
<span class="cl" style="left:169.5px;top:960.54px;"><i class="k">        if</i>(<i class="k">this</i>.<i class="f">size</i> == <i class="n">0</i>){</span>
<span class="ln" style="left:10.3px;top:1006.84px;">125</span>
<span class="cl" style="left:169.5px;top:1004.54px;"><i class="k">            return null;</i></span>
<span class="ln" style="left:10.3px;top:1050.84px;">126</span>
<span class="cl" style="left:169.5px;top:1048.54px;">        }</span>
<span class="ln" style="left:10.3px;top:1094.84px;">127</span>
<span class="cl" style="left:169.5px;top:1092.54px;"><i class="k">        this</i>.<i class="f">size</i>--<i class="k">;</i></span>
<span class="ln" style="left:10.3px;top:1138.84px;">128</span>
<span class="cl" style="left:169.5px;top:1136.54px;">        PQElement&lt;<i class="t">E</i>&gt; og = <i class="f">data</i>[<i class="n">0</i>]<i class="k">;</i></span>
<span class="ln" style="left:10.3px;top:1182.84px;">129</span>
<span class="cl" style="left:169.5px;top:1180.54px;"><i class="k">        this</i>.<i class="f">keyToIndexMap</i>.remove(<i class="f">data</i>[<i class="n">0</i>].<i class="f">data</i>)<i class="k">;</i></span>
<span class="ln" style="left:10.3px;top:1226.84px;">130</span>
<span class="cl" style="left:169.5px;top:1224.54px;"><i class="f">        data</i>[<i class="n">0</i>] = <i class="f">data</i>[<i class="k">this</i>.<i class="f">size</i> - <i class="n">1</i>]<i class="k">;</i></span>
<span class="ln" style="left:10.3px;top:1270.84px;">131</span>
<span class="cl" style="left:169.5px;top:1268.54px;"><i class="f">        data</i>[<i class="k">this</i>.<i class="f">size</i> - <i class="n">1</i>] = <i class="k">null;</i></span>
<span class="ln" style="left:10.3px;top:1314.84px;">132</span>
<span class="cl" style="left:169.5px;top:1312.54px;"><i class="k">        this</i>.<i class="f">keyToIndexMap</i>.put(<i class="f">data</i>[<i class="n">0</i>].<i class="f">data</i><i class="k">, </i><i class="n">0</i>)<i class="k">;</i></span>
<span class="ln" style="left:10.3px;top:1358.84px;">133</span>
<span class="cl" style="left:169.5px;top:1356.54px;"><i class="k">        this</i>.percolateDown(<i class="f">data</i>[<i class="n">0</i>])<i class="k">;</i></span>
<span class="ln" style="left:10.3px;top:1402.84px;">134</span>
<span class="cl" style="left:169.5px;top:1400.54px;"><i class="k">        return </i>og<i class="k">;</i></span>
<span class="ln" style="left:10.3px;top:1446.84px;">135</span>
<span class="cl" style="left:169.5px;top:1444.54px;">    }</span>
<span class="ln" style="left:10.3px;top:1490.84px;">136</span>
<span class="ln" style="left:10.3px;top:1534.84px;">137</span>
<span class="cl" style="left:169.5px;top:1532.54px;"><i class="a">    @Override</i></span>
<span class="ln" style="left:10.3px;top:1578.84px;">138</span>
<span class="cl" style="left:169.5px;top:1576.54px;"><i class="k">    public </i>PQElement&lt;<i class="t">E</i>&gt; <i class="m">peek</i>() {</span>
<span class="ln" style="left:10.3px;top:1622.84px;">139</span>
<span class="cl" style="left:169.5px;top:1620.54px;"><i class="k">        return </i><i class="f">data</i>[<i class="n">0</i>]<i class="k">;</i></span>
<div style="left:230px;top:158px;width:2px;height:572px;background:#393939;"></div>
<div style="left:230px;top:906px;width:2px;height:528px;background:#393939;"></div>
<div style="left:230px;top:1610px;width:2px;height:88px;background:#393939;"></div>
<div style="left:294px;top:246px;width:2px;height:44px;background:#393939;"></div>
<div style="left:294px;top:378px;width:2px;height:44px;background:#393939;"></div>
<div style="left:294px;top:994px;width:2px;height:44px;background:#393939;"></div>
<svg style="left:148px;top:128px" width="20" height="26" viewBox="0 0 20 26"><path d="M2 2 H18 V16 L10 23.5 L2 16 Z" fill="#2b2b2b" stroke="#606366" stroke-width="2"/><path d="M5.5 10 H14.5" stroke="#606366" stroke-width="2"/></svg>
<svg style="left:148px;top:216px" width="20" height="26" viewBox="0 0 20 26"><path d="M2 2 H18 V16 L10 23.5 L2 16 Z" fill="#2b2b2b" stroke="#606366" stroke-width="2"/><path d="M5.5 10 H14.5" stroke="#606366" stroke-width="2"/></svg>
<svg style="left:148px;top:348px" width="20" height="26" viewBox="0 0 20 26"><path d="M2 2 H18 V16 L10 23.5 L2 16 Z" fill="#2b2b2b" stroke="#606366" stroke-width="2"/><path d="M5.5 10 H14.5" stroke="#606366" stroke-width="2"/></svg>
<svg style="left:148px;top:876px" width="20" height="26" viewBox="0 0 20 26"><path d="M2 2 H18 V16 L10 23.5 L2 16 Z" fill="#2b2b2b" stroke="#606366" stroke-width="2"/><path d="M5.5 10 H14.5" stroke="#606366" stroke-width="2"/></svg>
<svg style="left:148px;top:964px" width="20" height="26" viewBox="0 0 20 26"><path d="M2 2 H18 V16 L10 23.5 L2 16 Z" fill="#2b2b2b" stroke="#606366" stroke-width="2"/><path d="M5.5 10 H14.5" stroke="#606366" stroke-width="2"/></svg>
<svg style="left:148px;top:1580px" width="20" height="26" viewBox="0 0 20 26"><path d="M2 2 H18 V16 L10 23.5 L2 16 Z" fill="#2b2b2b" stroke="#606366" stroke-width="2"/><path d="M5.5 10 H14.5" stroke="#606366" stroke-width="2"/></svg>
<svg style="left:148px;top:1624px" width="20" height="26" viewBox="0 0 20 26"><path d="M2 2 H18 V16 L10 23.5 L2 16 Z" fill="#2b2b2b" stroke="#606366" stroke-width="2"/><path d="M5.5 10 H14.5" stroke="#606366" stroke-width="2"/></svg>
<svg style="left:148px;top:-9px" width="20" height="26" viewBox="0 0 20 26"><path d="M2 23 H18 V9 L10 2 L2 9 Z" fill="#2b2b2b" stroke="#606366" stroke-width="2"/><path d="M5.5 15 H14.5" stroke="#606366" stroke-width="2"/></svg>
<svg style="left:148px;top:299px" width="20" height="26" viewBox="0 0 20 26"><path d="M2 23 H18 V9 L10 2 L2 9 Z" fill="#2b2b2b" stroke="#606366" stroke-width="2"/><path d="M5.5 15 H14.5" stroke="#606366" stroke-width="2"/></svg>
<svg style="left:148px;top:431px" width="20" height="26" viewBox="0 0 20 26"><path d="M2 23 H18 V9 L10 2 L2 9 Z" fill="#2b2b2b" stroke="#606366" stroke-width="2"/><path d="M5.5 15 H14.5" stroke="#606366" stroke-width="2"/></svg>
<svg style="left:148px;top:739px" width="20" height="26" viewBox="0 0 20 26"><path d="M2 23 H18 V9 L10 2 L2 9 Z" fill="#2b2b2b" stroke="#606366" stroke-width="2"/><path d="M5.5 15 H14.5" stroke="#606366" stroke-width="2"/></svg>
<svg style="left:148px;top:1047px" width="20" height="26" viewBox="0 0 20 26"><path d="M2 23 H18 V9 L10 2 L2 9 Z" fill="#2b2b2b" stroke="#606366" stroke-width="2"/><path d="M5.5 15 H14.5" stroke="#606366" stroke-width="2"/></svg>
<svg style="left:148px;top:1443px" width="20" height="26" viewBox="0 0 20 26"><path d="M2 23 H18 V9 L10 2 L2 9 Z" fill="#2b2b2b" stroke="#606366" stroke-width="2"/><path d="M5.5 15 H14.5" stroke="#606366" stroke-width="2"/></svg>
<svg style="left:64px;top:120px" width="34" height="32" viewBox="0 0 34 32"><circle cx="11" cy="15.7" r="9" fill="#4d9244"/><path d="M8 11.2 H14 M11 11.2 V20.2 M8 20.2 H14" stroke="#2b3b2b" stroke-width="1.8" fill="none"/><path d="M23.7 31.3 V8" stroke="#d25252" stroke-width="3"/><path d="M18 9.5 L23.7 2 L29.4 9.5 Z" fill="#d25252"/></svg>
<svg style="left:64px;top:868px" width="34" height="32" viewBox="0 0 34 32"><circle cx="11" cy="15.7" r="9" fill="#4d9244"/><path d="M8 11.2 H14 M11 11.2 V20.2 M8 20.2 H14" stroke="#2b3b2b" stroke-width="1.8" fill="none"/><path d="M23.7 31.3 V8" stroke="#d25252" stroke-width="3"/><path d="M18 9.5 L23.7 2 L29.4 9.5 Z" fill="#d25252"/></svg>
<svg style="left:64px;top:1572px" width="34" height="32" viewBox="0 0 34 32"><circle cx="11" cy="15.7" r="9" fill="#4d9244"/><path d="M8 11.2 H14 M11 11.2 V20.2 M8 20.2 H14" stroke="#2b3b2b" stroke-width="1.8" fill="none"/><path d="M23.7 31.3 V8" stroke="#d25252" stroke-width="3"/><path d="M18 9.5 L23.7 2 L29.4 9.5 Z" fill="#d25252"/></svg>
</div>
<span style="left:69.02px;top:17.88px;font-size:24px;color:#bbbbbb;transform-origin:0 0;transform:scaleX(0.9826);">File</span>
<span style="left:130.98px;top:17.88px;font-size:24px;color:#bbbbbb;transform-origin:0 0;transform:scaleX(1.0155);">Edit</span>
<span style="left:196.97px;top:17.88px;font-size:24px;color:#bbbbbb;transform-origin:0 0;transform:scaleX(1.0273);">View</span>
<span style="left:274.98px;top:17.88px;font-size:24px;color:#bbbbbb;transform-origin:0 0;transform:scaleX(1.0239);">Navigate</span>
<span style="left:396.99px;top:17.88px;font-size:24px;color:#bbbbbb;transform-origin:0 0;transform:scaleX(1.0109);">Code</span>
<span style="left:479.01px;top:17.88px;font-size:24px;color:#bbbbbb;transform-origin:0 0;transform:scaleX(0.9922);">Refactor</span>
<span style="left:592.95px;top:17.88px;font-size:24px;color:#bbbbbb;transform-origin:0 0;transform:scaleX(1.0492);">Build</span>
<span style="left:671.00px;top:17.88px;font-size:24px;color:#bbbbbb;">Run</span>
<span style="left:736.95px;top:17.88px;font-size:24px;color:#bbbbbb;transform-origin:0 0;transform:scaleX(1.0530);">Tools</span>
<span style="left:818.92px;top:17.88px;font-size:24px;color:#bbbbbb;transform-origin:0 0;transform:scaleX(1.0759);">Git</span>
<span style="left:872.96px;top:17.88px;font-size:24px;color:#bbbbbb;transform-origin:0 0;transform:scaleX(1.0427);">Window</span>
<span style="left:986.97px;top:17.88px;font-size:24px;color:#bbbbbb;transform-origin:0 0;transform:scaleX(1.0332);">Help</span>
<span style="left:1087.99px;top:17.88px;font-size:24px;color:#8c8f91;transform-origin:0 0;transform:scaleX(1.0110);">project06-collie - MinFourHeap.java</span>
<span style="left:22.97px;top:76.38px;font-size:24px;color:#bbbbbb;font-weight:700;transform-origin:0 0;transform:scaleX(1.0337);">project06-collie</span>
<span style="left:235.03px;top:76.38px;font-size:24px;color:#bbbbbb;transform-origin:0 0;transform:scaleX(0.9688);">src</span>
<span style="left:296.95px;top:76.38px;font-size:24px;color:#bbbbbb;transform-origin:0 0;transform:scaleX(1.0488);">edu</span>
<span style="left:371.00px;top:76.38px;font-size:24px;color:#bbbbbb;">caltech</span>
<span style="left:479.04px;top:76.38px;font-size:24px;color:#bbbbbb;transform-origin:0 0;transform:scaleX(0.9636);">cs2</span>
<span style="left:545.00px;top:76.38px;font-size:24px;color:#bbbbbb;">datastructures</span>
<span style="left:759.99px;top:76.38px;font-size:24px;color:#bbbbbb;transform-origin:0 0;transform:scaleX(1.0110);">MinFourHeap</span>
<span style="left:969.99px;top:76.38px;font-size:24px;color:#bbbbbb;transform-origin:0 0;transform:scaleX(1.0057);">percolateDown</span>
<span style="left:2268.00px;top:76.38px;font-size:24px;color:#bbbbbb;">MinFourHeapTests</span>
<span style="left:2764.06px;top:76.38px;font-size:24px;color:#bbbbbb;transform-origin:0 0;transform:scaleX(0.9372);">Git:</span>
<span style="left:74.97px;top:132.38px;font-size:24px;color:#bbbbbb;transform-origin:0 0;transform:scaleX(1.0297);">Commit to master</span>
<span style="left:93.03px;top:237.38px;font-size:24px;color:#bbbbbb;font-weight:700;transform-origin:0 0;transform:scaleX(0.9669);">Changes</span>
<span style="left:95.48px;top:1168.38px;font-size:24px;color:#bbbbbb;transform-origin:0 0;transform:scaleX(1.0191);">Amend</span>
<span style="left:56.50px;top:1218.54px;font-size:28px;color:#a9b7c6;font-family:'Liberation Mono',monospace;letter-spacing:-0.803px;">Adding for progress check</span>
<span style="left:85.96px;top:1838.38px;font-size:24px;color:#bbbbbb;transform-origin:0 0;transform:scaleX(1.0403);">Commit</span>
<span style="left:240.01px;top:1838.38px;font-size:24px;color:#bbbbbb;transform-origin:0 0;transform:scaleX(0.9870);">Commit and Push...</span>
<span style="left:1169.03px;top:132.38px;font-size:24px;color:#bbbbbb;transform-origin:0 0;transform:scaleX(0.9666);">Chat.java</span>
<span style="left:1366.01px;top:132.38px;font-size:24px;color:#bbbbbb;transform-origin:0 0;transform:scaleX(0.9893);">MinFourHeap.java</span>
<span style="left:1660.02px;top:132.38px;font-size:24px;color:#bbbbbb;transform-origin:0 0;transform:scaleX(0.9753);">NGramMap.java</span>
<span style="left:1929.99px;top:132.38px;font-size:24px;color:#bbbbbb;transform-origin:0 0;transform:scaleX(1.0113);">MoveToFrontDictionary.java</span>
<span style="left:2330.03px;top:132.38px;font-size:24px;color:#bbbbbb;transform-origin:0 0;transform:scaleX(0.9677);">ArrayDeque.java</span>
<span style="left:2604.01px;top:132.38px;font-size:24px;color:#bbbbbb;transform-origin:0 0;transform:scaleX(0.9906);">SpellingCorrector.java</span>
<span style="left:2936.62px;top:132.38px;font-size:24px;color:#bbbbbb;transform-origin:0 0;transform:scaleX(0.9770);">IPriorityQueue.java</span>
<span style="left:1170.98px;top:185.38px;font-size:24px;color:#bbbbbb;transform-origin:0 0;transform:scaleX(1.0173);">findSmallest</span>
<span style="left:1753.03px;top:186.54px;font-size:25px;color:#5f6669;font-weight:700;transform-origin:0 0;transform:scaleX(0.9697);">Cc</span>
<span style="left:1806.90px;top:186.54px;font-size:25px;color:#5f6669;font-weight:700;transform-origin:0 0;transform:scaleX(1.1013);">W</span>
<span style="left:1860.68px;top:186.54px;font-size:25px;color:#5f6669;font-weight:700;transform-origin:0 0;transform:scaleX(1.3184);">.*</span>
<span style="left:1947.02px;top:189.27px;font-size:20px;color:#bbbbbb;transform-origin:0 0;transform:scaleX(0.9789);">3 results</span>
<span style="left:3073.91px;top:245.23px;font-size:23px;color:#b4b8bc;transform-origin:0 0;transform:scaleX(1.0940);">6</span>
<span style="left:3136.22px;top:245.23px;font-size:23px;color:#b4b8bc;transform-origin:0 0;transform:scaleX(0.7814);">1</span>
<span style="left:56.05px;top:1902.38px;font-size:24px;color:#bbbbbb;transform-origin:0 0;transform:scaleX(0.9467);">Run:</span>
<span style="left:182.00px;top:1902.38px;font-size:24px;color:#bbbbbb;">MinFourHeapTests</span>
<span style="left:64.80px;top:1963.38px;font-size:24px;color:#bbbbbb;transform-origin:0 0;transform:scaleX(1.1977);">»</span>
<span style="left:1112.31px;top:1955.78px;font-size:24px;color:#e05555;transform-origin:0 0;transform:scaleX(0.9908);">Tests failed: 8</span>
<span style="left:1255.75px;top:1955.78px;font-size:24px;color:#bbbbbb;transform-origin:0 0;transform:scaleX(0.9479);">, passed: 7</span>
<span style="left:1374.03px;top:1955.78px;font-size:24px;color:#7f8183;transform-origin:0 0;transform:scaleX(0.9666);">of 15 tests – 8 sec 661 ms</span>
<span style="left:96.00px;top:2011.08px;font-size:22px;color:#bbbbbb;transform-origin:0 0;transform:scaleX(0.9956);">Git</span>
<span style="left:192.08px;top:2011.08px;font-size:22px;color:#ffffff;transform-origin:0 0;transform:scaleX(0.9168);">Run</span>
<span style="left:302.03px;top:2011.08px;font-size:22px;color:#bbbbbb;transform-origin:0 0;transform:scaleX(0.9659);">TODO</span>
<span style="left:438.02px;top:2011.08px;font-size:22px;color:#bbbbbb;transform-origin:0 0;transform:scaleX(0.9793);">Problems</span>
<span style="left:605.99px;top:2011.08px;font-size:22px;color:#bbbbbb;transform-origin:0 0;transform:scaleX(1.0103);">Terminal</span>
<span style="left:763.04px;top:2011.08px;font-size:22px;color:#bbbbbb;transform-origin:0 0;transform:scaleX(0.9607);">Build</span>
<span style="left:3084.55px;top:2011.08px;font-size:22px;color:#bbbbbb;transform-origin:0 0;transform:scaleX(0.9538);">Event Log</span>
<span style="left:53.98px;top:2049.78px;font-size:24px;color:#bbbbbb;transform-origin:0 0;transform:scaleX(1.0175);">Pushed 1 commit to origin/master (a minute ago)</span>
<span style="left:2708.08px;top:2049.78px;font-size:24px;color:#bbbbbb;transform-origin:0 0;transform:scaleX(0.9240);">70:21</span>
<span style="left:2790.17px;top:2049.78px;font-size:24px;color:#bbbbbb;transform-origin:0 0;transform:scaleX(0.8297);">CRLF</span>
<span style="left:2866.06px;top:2049.78px;font-size:24px;color:#bbbbbb;transform-origin:0 0;transform:scaleX(0.9412);">UTF-8</span>
<span style="left:2953.05px;top:2049.78px;font-size:24px;color:#bbbbbb;transform-origin:0 0;transform:scaleX(0.9473);">4 spaces</span>
<span style="left:3102.41px;top:2049.78px;font-size:24px;color:#bbbbbb;transform-origin:0 0;transform:scaleX(0.9896);">master</span>
<span style="left:-0.94px;top:-18.77px;font-size:23px;color:#bbbbbb;left:0;top:0;transform-origin:0 0;transform:translate(12.53px,199px) rotate(-90deg) scaleX(0.9358);">Project</span>
<span style="left:-0.98px;top:-18.77px;font-size:23px;color:#f0f0f0;left:0;top:0;transform-origin:0 0;transform:translate(12.53px,354px) rotate(-90deg) scaleX(0.9844);">Commit</span>
<span style="left:-0.94px;top:-18.77px;font-size:23px;color:#bbbbbb;left:0;top:0;transform-origin:0 0;transform:translate(12.53px,1754px) rotate(-90deg) scaleX(0.9429);">Structure</span>
<span style="left:-0.94px;top:-18.77px;font-size:23px;color:#bbbbbb;left:0;top:0;transform-origin:0 0;transform:translate(12.53px,1937px) rotate(-90deg) scaleX(0.9387);">Bookmarks</span>
</body></html>
